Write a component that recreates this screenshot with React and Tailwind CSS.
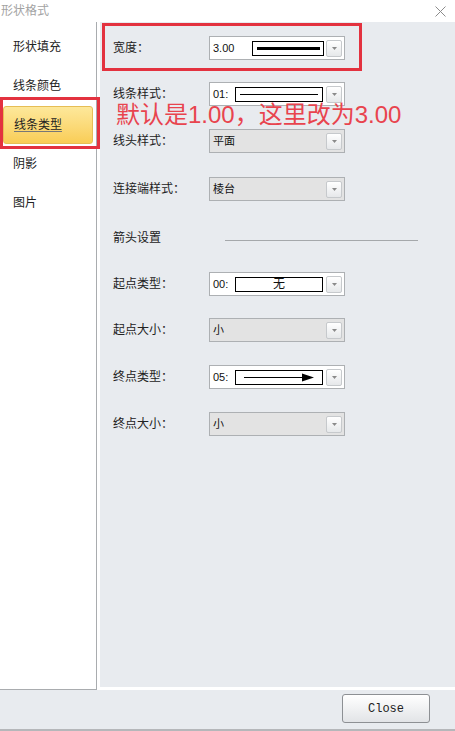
import React from "react";

const FONT = { fontFamily: '"Liberation Sans", "Noto Sans CJK SC", sans-serif' };

function DropButton() {
  return (
    <div className="w-[16px] h-[17px] mr-[2px] shrink-0 border border-[#c6c9cc] rounded-[2px] bg-gradient-to-b from-white to-[#e6e8ea] flex items-center justify-center">
      <svg width="5" height="3" viewBox="0 0 5 3">
        <path d="M0 0 L5 0 L2.5 3 Z" fill="#8a8a8a" />
      </svg>
    </div>
  );
}

function Combo({ disabled, children }) {
  return (
    <div
      className={`w-[136px] h-[24px] border border-[#adb0b3] flex items-center justify-between ${
        disabled ? "bg-[#e3e3e3]" : "bg-white"
      }`}
    >
      <div className="flex items-center pl-[3px] text-[11px] text-[#111] h-full">{children}</div>
      <DropButton />
    </div>
  );
}

function Swatch({ wide, children }) {
  return (
    <div
      className={`${wide ? "w-[72px]" : "w-[88px]"} h-[15px] border border-black bg-white flex items-center justify-center`}
    >
      {children}
    </div>
  );
}

function Row({ label, className = "", children }) {
  return (
    <div className={`flex items-center h-[24px] ${className}`}>
      <div className="w-[109px] shrink-0 pl-[13px] text-[12px] text-[#222]">{label}</div>
      {children}
    </div>
  );
}

const menu = ["形状填充", "线条颜色", "线条类型", "阴影", "图片"];

export default function App() {
  return (
    <div className="relative w-[455px] h-[731px] bg-white flex flex-col overflow-hidden" style={FONT}>
      {/* title bar */}
      <div className="h-[22px] flex items-center justify-between shrink-0">
        <span className="pl-[1px] text-[12px] text-[#a3a3a3]">形状格式</span>
        <svg width="11" height="11" viewBox="0 0 11 11" className="mr-[9px]">
          <path d="M0.5 0.5 L10.5 10.5 M10.5 0.5 L0.5 10.5" stroke="#8c8c8c" strokeWidth="1" />
        </svg>
      </div>

      {/* body */}
      <div className="flex flex-1 min-h-0">
        <div className="w-[97px] shrink-0 bg-white border-r border-b border-[#a9acaf] flex flex-col gap-[1px] px-[3px] pt-[6px]">
          {menu.map((m) =>
            m === "线条类型" ? (
              <div
                key={m}
                className="h-[38px] flex items-center pl-[10px] rounded-[3px] border border-[#e6bd55] bg-gradient-to-b from-[#fde89a] to-[#f9cd55] text-[12px] text-[#222]"
              >
                <span className="underline decoration-[#777] underline-offset-2">{m}</span>
              </div>
            ) : (
              <div key={m} className="h-[38px] flex items-center pl-[10px] text-[12px] text-[#222]">
                {m}
              </div>
            )
          )}
        </div>

        <div className="flex-1 ml-[3px] mb-[2px] bg-[#e8ebef] border-b border-white flex flex-col">
          <Row label="宽度：" className="mt-[14px]">
            <Combo>
              <span className="w-[39px] shrink-0">3.00</span>
              <Swatch wide>
                <div className="w-[63px] h-[3px] bg-black" />
              </Swatch>
            </Combo>
          </Row>
          <Row label="线条样式：" className="mt-[22px]">
            <Combo>
              <span className="w-[22px] shrink-0">01:</span>
              <Swatch>
                <div className="w-[78px] h-[1px] bg-black" />
              </Swatch>
            </Combo>
          </Row>
          <Row label="线头样式：" className="mt-[23px]">
            <Combo disabled>平面</Combo>
          </Row>
          <Row label="连接端样式：" className="mt-[24px]">
            <Combo disabled>棱台</Combo>
          </Row>
          <div className="flex items-center h-[24px] mt-[25px]">
            <div className="w-[125px] shrink-0 pl-[13px] text-[12px] text-[#222]">箭头设置</div>
            <div className="w-[193px] h-[1px] bg-[#a5a8ab] mt-[4px]" />
          </div>
          <Row label="起点类型：" className="mt-[22px]">
            <Combo>
              <span className="w-[22px] shrink-0">00:</span>
              <Swatch>
                <span className="text-[12px] leading-none">无</span>
              </Swatch>
            </Combo>
          </Row>
          <Row label="起点大小：" className="mt-[22px]">
            <Combo disabled>小</Combo>
          </Row>
          <Row label="终点类型：" className="mt-[23px]">
            <Combo>
              <span className="w-[22px] shrink-0">05:</span>
              <Swatch>
                <svg width="70" height="9" viewBox="0 0 70 9">
                  <path d="M0 4.5 L62 4.5" stroke="black" strokeWidth="1" />
                  <path d="M58 0.5 L70 4.5 L58 8.5 Z" fill="black" />
                </svg>
              </Swatch>
            </Combo>
          </Row>
          <Row label="终点大小：" className="mt-[23px]">
            <Combo disabled>小</Combo>
          </Row>
        </div>
      </div>

      {/* bottom strip */}
      <div className="h-[41px] shrink-0 bg-[#e8ebef] border-b-[2px] border-[#b5b7ba] flex items-start justify-end pr-[25px] pt-[4px]">
        <button
          className="w-[88px] h-[29px] rounded-[3px] border border-[#8d9094] bg-gradient-to-b from-white to-[#e2e4e7] text-[12px] text-[#222]"
          style={{ fontFamily: '"Liberation Mono", monospace' }}
        >
          Close
        </button>
      </div>

      {/* annotations */}
      <div className="absolute left-[102px] top-[23px] w-[260px] h-[48px] border-[3px] border-[#e3323f] pointer-events-none" />
      <div className="absolute left-0 top-[97px] w-[100px] h-[52px] border-[3px] border-[#e3323f] pointer-events-none" />
      <div className="absolute left-[116px] top-[101px] text-[24px] leading-[28px] text-[#e8444e] whitespace-nowrap pointer-events-none">
        默认是1.00，这里改为3.00
      </div>
    </div>
  );
}
